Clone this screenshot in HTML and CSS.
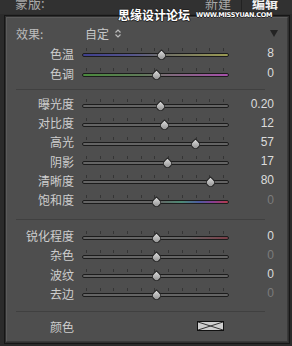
FILE: index.html
```html
<!DOCTYPE html>
<html lang="zh">
<head>
  <meta charset="UTF-8">
  <title>效果面板</title>
  <link rel="stylesheet" href="styles.css">
</head>
<body>
  <div class="header">
    <span class="mask-label">蒙版:</span>
    <div class="tabs">
      <span class="tab">新建</span>
      <span class="tab active">编辑</span>
    </div>
  </div>

  <div class="watermark">
    <span class="wm-cn">思缘设计论坛</span>
    <span class="wm-en">WWW.MISSYUAN.COM</span>
  </div>

  <div class="frame">
    <div class="panel">
      <div class="effect-row">
        <span class="effect-label">效果:</span>
        <span class="preset">自定
          <svg class="updown" width="6" height="9" viewBox="0 0 6 9">
            <path d="M0.5 3.5 L3 1 L5.5 3.5 M0.5 5.5 L3 8 L5.5 5.5" fill="none" stroke="#bbb" stroke-width="1.2"/>
          </svg>
        </span>
        <span class="collapse"></span>
      </div>

      <div class="section" id="sec-color"></div>
      <hr class="divider first">
      <div class="section tight" id="sec-tone"></div>
      <hr class="divider second">
      <div class="section tight" id="sec-detail"></div>
      <hr class="divider third">

      <div class="row color-row">
        <span class="label">颜色</span>
        <span class="swatch">
          <svg width="25" height="8" viewBox="0 0 25 8">
            <path d="M0 0 L25 8 M0 8 L25 0" stroke="#333" stroke-width="1"/>
          </svg>
        </span>
      </div>
    </div>
  </div>

  <script>
    const sections = {
      'sec-color': [
        { name: '色温', pos: 53.7, value: '8', track: 'temp' },
        { name: '色调', pos: 50.3, value: '0', track: 'tint' }
      ],
      'sec-tone': [
        { name: '曝光度', pos: 53, value: '0.20' },
        { name: '对比度', pos: 55.8, value: '12' },
        { name: '高光', pos: 76.9, value: '57' },
        { name: '阴影', pos: 57.8, value: '17' },
        { name: '清晰度', pos: 87, value: '80' },
        { name: '饱和度', pos: 50.3, value: '0', track: 'sat', dim: true }
      ],
      'sec-detail': [
        { name: '锐化程度', pos: 50.3, value: '0', track: 'sharp' },
        { name: '杂色', pos: 50.3, value: '0', dim: true },
        { name: '波纹', pos: 50.3, value: '0' },
        { name: '去边', pos: 50.3, value: '0', dim: true }
      ]
    };

    for (const id in sections) {
      const box = document.getElementById(id);
      box.innerHTML = sections[id].map(s => `
        <div class="row">
          <span class="label">${s.name}</span>
          <div class="slider">
            <div class="ticks"></div>
            <div class="track ${s.track || ''}"></div>
            <div class="thumb" style="left:${s.pos}%"></div>
          </div>
          <span class="value${s.dim ? ' dim' : ''}">${s.value}</span>
        </div>`).join('');
    }
  </script>
</body>
</html>
```

FILE: styles.css
```css
body {
  margin: 0;
  width: 292px;
  height: 346px;
  overflow: hidden;
  background: #2b2b2b;
  font-family: "Noto Sans CJK SC", "Liberation Sans", sans-serif;
  position: relative;
}

.header {
  height: 14px;
  background: #313131;
  display: flex;
  justify-content: space-between;
  overflow: hidden;
  font-size: 13px;
  line-height: 15px;
  color: #a8a8a8;
}
.mask-label {
  margin: -5px 0 0 15px;
}
.tabs {
  display: flex;
  margin-right: 14px;
}
.tab {
  margin-top: -5px;
  padding: 0 10px;
}
.tab.active {
  color: #f2f2f2;
  font-weight: bold;
  border-left: 1px solid #222;
  padding-right: 0;
}

/* watermark over the header */
.watermark {
  position: absolute;
  top: 8px;
  left: 118px;
  display: flex;
  align-items: center;
  gap: 6px;
  color: #fff;
  text-shadow: 1px 0 0 #222, -1px 0 0 #222, 0 1px 0 #222, 0 -1px 0 #222;
}
.wm-cn {
  font-size: 12px;
  font-weight: bold;
  line-height: 14px;
}
.wm-en {
  font-family: "DejaVu Sans", sans-serif;
  font-size: 6.5px;
  font-weight: bold;
  letter-spacing: -0.3px;
}

.frame {
  margin: 1px 2px 0 4px;
  border: 1px solid #161616;
  background: #2f2f2f;
  padding: 1px;
}
.panel {
  border: 1px solid #5b5b5b;
  border-right-color: #3a3a3a;
  border-bottom-color: #3a3a3a;
  background: #4e4e4e;
  padding: 5px 13px 4px 0;
  box-sizing: border-box;
  height: 325px;
}

.effect-row {
  height: 20px;
  display: flex;
  align-items: center;
  font-size: 12px;
  color: #bdbdbd;
}
.effect-label {
  margin-left: 9px;
  width: 69px;
}
.preset {
  display: flex;
  align-items: center;
  gap: 6px;
  color: #c8c8c8;
}
.collapse {
  margin-left: auto;
  width: 0;
  height: 0;
  border-left: 4px solid transparent;
  border-right: 4px solid transparent;
  border-top: 7px solid #232323;
  margin-right: -4px;
}

.row {
  display: grid;
  grid-template-columns: 67px 147px 1fr;
  column-gap: 8px;
  align-items: center;
  height: 20px;
}
.section.tight .row {
  height: 19.2px;
}
.label {
  text-align: right;
  font-size: 12px;
  color: #cdcdcd;
}
.value {
  text-align: right;
  font-family: "Liberation Sans", sans-serif;
  font-size: 12px;
  color: #dcdcdc;
}
.value.dim {
  color: #7c7c7c;
}

.slider {
  position: relative;
  height: 14px;
}
.ticks {
  position: absolute;
  left: 4px;
  width: 138px;
  top: 2px;
  height: 3px;
  background: repeating-linear-gradient(to right, #353535 0 1px, transparent 1px 13.7px);
}
.track {
  position: absolute;
  left: 0;
  right: 0;
  top: 7px;
  height: 2px;
  border: 1px solid #1c1c1c;
  border-radius: 3px;
  background: #646464;
}
.track.temp {
  background: linear-gradient(to right, #3f3f8e, #56568a 35%, #6f6f68 55%, #9a9a52);
}
.track.tint {
  background: linear-gradient(to right, #4a8a3c, #5f7a58 40%, #806a7c 60%, #a650aa);
}
.track.sat {
  background: linear-gradient(to right, #646464 0%, #646464 52%, #4d8a74 68%, #4d5aa0 80%, #8a3c90 90%, #b33c4a 100%);
}
.track.sharp {
  background: linear-gradient(to right, #646464 0%, #646464 72%, #7c3e48 100%);
}
.thumb {
  position: absolute;
  top: 5px;
  width: 7px;
  height: 7px;
  margin-left: -4px;
  background: linear-gradient(135deg, #dcdcdc, #8c8c8c);
  border: 1px solid #2a2a2a;
  border-radius: 0 50% 50% 50%;
  transform: rotate(45deg);
}

.divider {
  border: none;
  border-top: 1px solid #404040;
  margin: 6px 9px 4px 9px;
  height: 0;
}
.divider.second {
  margin: 10px 9px 6px 9px;
}
.divider.third {
  margin: 8px 9px 5px 9px;
}

.color-row {
  height: 19px;
}
.swatch {
  justify-self: end;
  margin-right: 5px;
  width: 25px;
  height: 8px;
  border: 1px solid #111;
  background: #cfcfcf;
  display: flex;
}
```
